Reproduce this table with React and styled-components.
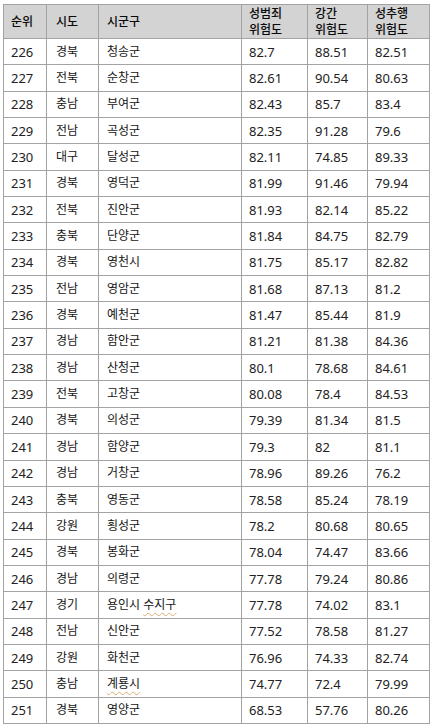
import React from "react";
import styled, { createGlobalStyle } from "styled-components";

const rows = [
  ["226", "경북", "청송군", "82.7", "88.51", "82.51"],
  ["227", "전북", "순창군", "82.61", "90.54", "80.63"],
  ["228", "충남", "부여군", "82.43", "85.7", "83.4"],
  ["229", "전남", "곡성군", "82.35", "91.28", "79.6"],
  ["230", "대구", "달성군", "82.11", "74.85", "89.33"],
  ["231", "경북", "영덕군", "81.99", "91.46", "79.94"],
  ["232", "전북", "진안군", "81.93", "82.14", "85.22"],
  ["233", "충북", "단양군", "81.84", "84.75", "82.79"],
  ["234", "경북", "영천시", "81.75", "85.17", "82.82"],
  ["235", "전남", "영암군", "81.68", "87.13", "81.2"],
  ["236", "경북", "예천군", "81.47", "85.44", "81.9"],
  ["237", "경남", "함안군", "81.21", "81.38", "84.36"],
  ["238", "경남", "산청군", "80.1", "78.68", "84.61"],
  ["239", "전북", "고창군", "80.08", "78.4", "84.53"],
  ["240", "경북", "의성군", "79.39", "81.34", "81.5"],
  ["241", "경남", "함양군", "79.3", "82", "81.1"],
  ["242", "경남", "거창군", "78.96", "89.26", "76.2"],
  ["243", "충북", "영동군", "78.58", "85.24", "78.19"],
  ["244", "강원", "횡성군", "78.2", "80.68", "80.65"],
  ["245", "경북", "봉화군", "78.04", "74.47", "83.66"],
  ["246", "경남", "의령군", "77.78", "79.24", "80.86"],
  ["247", "경기", "용인시 수지구", "77.78", "74.02", "83.1"],
  ["248", "전남", "신안군", "77.52", "78.58", "81.27"],
  ["249", "강원", "화천군", "76.96", "74.33", "82.74"],
  ["250", "충남", "계룡시", "74.77", "72.4", "79.99"],
  ["251", "경북", "영양군", "68.53", "57.76", "80.26"],
];

// words the editor flagged with a wavy underline
const flagged = { "용인시 수지구": ["용인시 ", "수지구"], "계룡시": ["", "계룡시"] };

const Global = createGlobalStyle`
  html, body { margin: 0; padding: 0; background: #fff; }
  body { font-family: "Noto Sans", "Noto Sans CJK KR", sans-serif; color: #1a1a1a; }
`;

const Table = styled.div`
  display: grid;
  grid-template-columns: 43px 52px 143px 66px 60px 62px;
  grid-template-rows: 34px;
  grid-auto-rows: 26.35px;
  width: max-content;
  margin: 4px 0 0 3px;
  border-left: 1px solid #a3a3a3;
  border-top: 1px solid #a3a3a3;
`;

const Cell = styled.div`
  box-sizing: border-box;
  border-right: 1px solid #a3a3a3;
  border-bottom: 1px solid #a3a3a3;
  padding: 0 0 0 ${(p) => p.$pad || 7}px;
  display: flex;
  align-items: center;
  font-size: ${(p) => (p.$ko ? "12px" : "13px")};
  font-weight: ${(p) => (p.$head ? 500 : 400)};
  line-height: 16px;
  white-space: pre-line;
  background: ${(p) => (p.$head ? "#d3d3d3" : "#fff")};
  color: ${(p) => (p.$head ? "#0a0a0a" : p.$ko ? "#151515" : "#222")};
`;

const Squiggle = styled.span`
  text-decoration: underline wavy #d8b070;
  text-decoration-thickness: 1px;
  text-underline-offset: 3px;
`;

const heads = ["순위", "시도", "시군구", "성범죄\n위험도", "강간\n위험도", "성추행\n위험도"];
const pads = [7, 9, 8, 7, 7, 7];

function Name({ text }) {
  const f = flagged[text];
  if (!f) return text;
  return (
    <span>
      {f[0]}
      <Squiggle>{f[1]}</Squiggle>
    </span>
  );
}

export default function App() {
  return (
    <>
      <Global />
      <Table>
        {heads.map((h, i) => (
          <Cell key={h} $head $ko $pad={pads[i]}>{h}</Cell>
        ))}
        {rows.map((r) =>
          r.map((v, i) => (
            <Cell key={r[0] + i} $ko={i === 1 || i === 2} $pad={pads[i]}>
              {i === 2 ? <Name text={v} /> : v}
            </Cell>
          ))
        )}
      </Table>
    </>
  );
}
